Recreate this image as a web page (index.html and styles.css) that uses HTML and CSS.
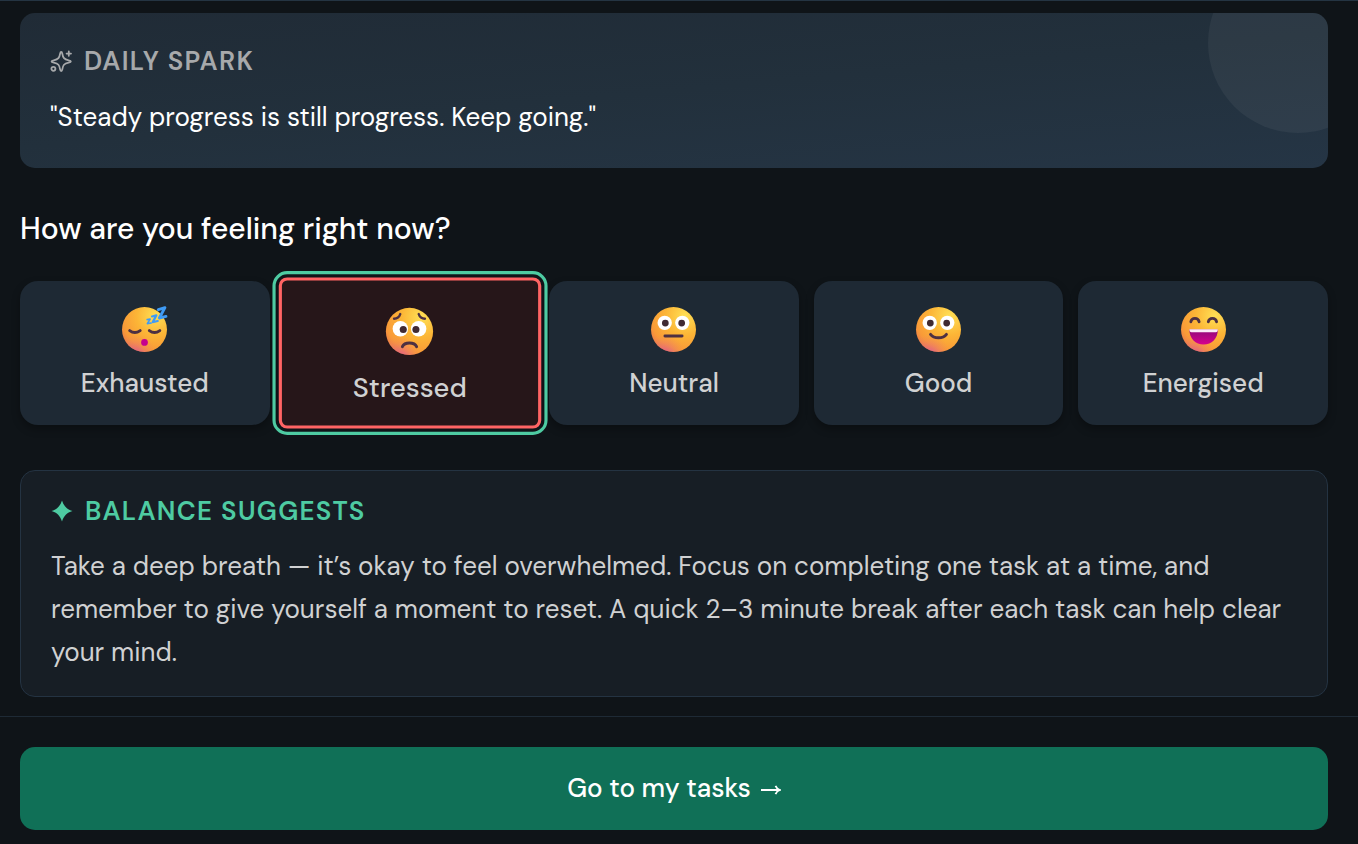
FILE: index.html
```html
<!DOCTYPE html>
<html lang="en">
<head>
    <meta charset="UTF-8">
    <meta name="viewport" content="width=device-width, initial-scale=1.0">
    <title>Balance - Check in</title>
    <link rel="stylesheet" href="styles.css">
</head>
<body>
    <!-- Shared gradients for the mood faces -->
    <svg class="defs" width="0" height="0" aria-hidden="true">
        <defs>
            <radialGradient id="face" cx="0.75" cy="0.2" r="0.95">
                <stop offset="0" stop-color="#ffe055"/>
                <stop offset="0.45" stop-color="#fcb536"/>
                <stop offset="0.8" stop-color="#f99a38"/>
                <stop offset="1" stop-color="#e8724f"/>
            </radialGradient>
            <radialGradient id="blush" cx="0.3" cy="1.05" r="0.45">
                <stop offset="0" stop-color="#e0569a" stop-opacity="0.9"/>
                <stop offset="1" stop-color="#f08a5a" stop-opacity="0"/>
            </radialGradient>
            <linearGradient id="laugh" x1="0" y1="0" x2="0" y2="1">
                <stop offset="0" stop-color="#8f0a78"/>
                <stop offset="1" stop-color="#d6008f"/>
            </linearGradient>
        </defs>
    </svg>

    <main>
        <section class="spark-card">
            <h2 class="card-label">
                <svg class="label-icon" viewBox="0 0 22 22" fill="none" stroke="currentColor" stroke-width="1.8" stroke-linejoin="round" stroke-linecap="round" aria-hidden="true">
                    <path d="M11.2 2 C11.8 2 12.1 2.6 12.3 3.6 C13 7.8 14 9.4 18.6 10.4 C21.6 11 21.6 12 18.6 12.6 C14 13.6 13 15 12.3 19.4 C12.1 20.6 11.8 21 11.2 21 C10.6 21 10.3 20.6 10.1 19.4 C9.4 15 8.4 13.6 3.8 12.6 C.8 12 .8 11 3.8 10.4 C8.4 9.4 9.4 7.8 10.1 3.6 C10.3 2.6 10.6 2 11.2 2 Z"/>
                    <path d="M18.8 1.4 V5.8 M16.6 3.6 H21"/>
                    <circle cx="3.4" cy="18.8" r="2"/>
                </svg>
                DAILY SPARK
            </h2>
            <p class="spark-quote">"Steady progress is still progress. Keep going."</p>
        </section>

        <h1>How are you feeling right now?</h1>

        <div class="moods">
            <button type="button" class="mood" aria-pressed="false">
                <svg class="mood-face" viewBox="0 0 44 44" aria-hidden="true">
                    <circle cx="22" cy="22" r="22" fill="url(#face)"/>
                    <circle cx="22" cy="22" r="22" fill="url(#blush)"/>
                    <path class="ink" d="M7.5 23 Q12.5 27 17.8 23 M26.7 23 Q31.8 27 37 23"/>
                    <circle cx="22" cy="34.6" r="3.3" fill="#c5008f"/>
                    <path class="zed" stroke-width="2.8" d="M35.5 2.6 L42 .6 L36.5 10.8 L43 9.2"/>
                    <path class="zed" stroke-width="2.1" d="M29.3 9.3 L33.6 8.2 L30 14.8 L35 13.7"/>
                    <path class="zed" stroke-width="1.6" d="M24.6 12.3 L27.5 11.8 L24.8 16.3 L28.5 15.7"/>
                </svg>
                <span>Exhausted</span>
            </button>
            <button type="button" class="mood mood-selected" aria-pressed="true">
                <svg class="mood-face" viewBox="0 0 44 44" aria-hidden="true">
                    <circle cx="22" cy="22" r="22" fill="url(#face)"/>
                    <circle cx="22" cy="22" r="22" fill="url(#blush)"/>
                    <path class="ink thin" d="M7.6 10.1 Q12 10 13.4 5.8 M30.6 5.8 Q32 10 36.4 10.1"/>
                    <circle cx="13.5" cy="19.5" r="7.2" fill="#fff"/>
                    <circle cx="30.5" cy="19.5" r="7.2" fill="#fff"/>
                    <circle cx="16.2" cy="20.2" r="3.3" fill="#402a32"/>
                    <circle cx="28" cy="20.2" r="3.3" fill="#402a32"/>
                    <path class="ink" d="M15.4 36.2 C17.5 31.7 26.5 31.7 28.6 36.2"/>
                </svg>
                <span>Stressed</span>
            </button>
            <button type="button" class="mood" aria-pressed="false">
                <svg class="mood-face" viewBox="0 0 44 44" aria-hidden="true">
                    <circle cx="22" cy="22" r="22" fill="url(#face)"/>
                    <circle cx="22" cy="22" r="22" fill="url(#blush)"/>
                    <circle cx="13.4" cy="15.5" r="7" fill="#fff"/>
                    <circle cx="30.6" cy="15.5" r="7" fill="#fff"/>
                    <circle cx="14" cy="15.7" r="3.3" fill="#402a32"/>
                    <circle cx="30" cy="15.7" r="3.3" fill="#402a32"/>
                    <path class="ink" d="M13.6 28.4 H30.4"/>
                </svg>
                <span>Neutral</span>
            </button>
            <button type="button" class="mood" aria-pressed="false">
                <svg class="mood-face" viewBox="0 0 44 44" aria-hidden="true">
                    <circle cx="22" cy="22" r="22" fill="url(#face)"/>
                    <circle cx="22" cy="22" r="22" fill="url(#blush)"/>
                    <circle cx="13.4" cy="15.5" r="7" fill="#fff"/>
                    <circle cx="30.6" cy="15.5" r="7" fill="#fff"/>
                    <circle cx="14" cy="15.7" r="3.3" fill="#402a32"/>
                    <circle cx="30" cy="15.7" r="3.3" fill="#402a32"/>
                    <path class="ink" d="M14.2 26.7 C17.5 31.2 26.5 31.2 29.8 26.7"/>
                </svg>
                <span>Good</span>
            </button>
            <button type="button" class="mood" aria-pressed="false">
                <svg class="mood-face" viewBox="0 0 44 44" aria-hidden="true">
                    <circle cx="22" cy="22" r="22" fill="url(#face)"/>
                    <circle cx="22" cy="22" r="22" fill="url(#blush)"/>
                    <path class="ink" d="M9.6 14.5 C10.5 10 16.8 10 17.7 14.5 M26.7 14.5 C27.6 10 33.9 10 34.8 14.5"/>
                    <path fill="url(#laugh)" d="M8.2 22 H36 C36 31 30 36.6 22.1 36.6 C14.2 36.6 8.2 31 8.2 22 Z"/>
                    <path fill="#fbeaf6" d="M8.2 21.8 H36 C36 23.8 35.3 24.6 34 24.6 H10.2 C8.9 24.6 8.2 23.8 8.2 21.8 Z"/>
                </svg>
                <span>Energised</span>
            </button>
        </div>

        <section class="suggestion-card">
            <h2 class="card-label">
                <svg class="label-icon" viewBox="0 0 22 22" aria-hidden="true">
                    <path fill="currentColor" d="M11 .5 C12.8 6.2 15.8 9.2 21.5 11 C15.8 12.8 12.8 15.8 11 21.5 C9.2 15.8 6.2 12.8 .5 11 C6.2 9.2 9.2 6.2 11 .5 Z"/>
                </svg>
                BALANCE SUGGESTS
            </h2>
            <p>Take a deep breath — it’s okay to feel overwhelmed. Focus on completing one task at a time, and remember to give yourself a moment to reset. A quick 2–3 minute break after each task can help clear your mind.</p>
        </section>
    </main>

    <footer>
        <button type="button" class="tasks-btn">
            Go to my tasks
            <svg viewBox="0 0 20 12" fill="none" stroke="currentColor" stroke-width="1.8" aria-hidden="true">
                <path d="M0 7 H18.5 M14.5 2.8 Q15.8 6 19 7 Q15.8 8 14.5 11.2"/>
            </svg>
        </button>
    </footer>
</body>
</html>
```

FILE: styles.css
```css
* {
    box-sizing: border-box;
}

body {
    font-family: "DM Sans", "Inter", "Liberation Sans", sans-serif;
    font-size: 26px;
    background-color: #0f1418;
    color: #fff;
    margin: 0;
    border-top: 1px solid #243442;
}

.defs {
    position: absolute;
}

main {
    padding: 12px 30px 19px 20px;
}

h1, h2, p {
    margin: 0;
}

h1 {
    font-size: 30px;
    font-weight: 500;
    line-height: 40px;
    margin: 41px 0 32px;
}

.card-label {
    display: flex;
    align-items: center;
    gap: 12px;
    font-size: 26px;
    font-weight: 600;
    letter-spacing: 0.05em;
    line-height: 36px;
}

.label-icon {
    width: 22px;
    height: 22px;
}

.spark-card {
    position: relative;
    overflow: hidden;
    padding: 30px 30px 31px;
    border-radius: 15px;
    background: linear-gradient(175deg, #202b36, #22303c 50%, #253545);
}

.spark-card::after {
    content: "";
    position: absolute;
    top: -60px;
    right: -60px;
    width: 180px;
    height: 180px;
    border-radius: 50%;
    background-color: rgba(255, 255, 255, 0.05);
}

.spark-card .card-label {
    color: #a7a9ab;
}

.spark-quote {
    margin-top: 18px;
    line-height: 40px;
}

.moods {
    display: grid;
    grid-template-columns: repeat(5, 1fr);
    gap: 15px;
}

.mood {
    display: flex;
    flex-direction: column;
    align-items: center;
    gap: 13px;
    padding: 26px 0 18px;
    border: 0;
    border-radius: 18px;
    background-color: #1e2934;
    color: #d0d1d2;
    font: inherit;
    font-weight: 500;
    line-height: 36px;
    box-shadow: 0 4px 8px rgba(0, 0, 0, 0.3);
    cursor: pointer;
}

.mood-face {
    width: 45px;
    height: 45px;
    overflow: visible;
}

.mood-selected {
    border: 3px solid #ff6464;
    border-radius: 8px;
    background-color: #261619;
    box-shadow: none;
    outline: 3px solid #4ecba2;
    outline-offset: 3px;
    transform: scale(1.05);
}

.ink {
    fill: none;
    stroke: #4d3042;
    stroke-width: 2.8;
    stroke-linecap: round;
}

.ink.thin {
    stroke-width: 2.2;
}

.zed {
    fill: none;
    stroke: #3f9bf5;
    stroke-linejoin: round;
    stroke-linecap: round;
}

.suggestion-card {
    margin-top: 45px;
    padding: 22px 30px;
    border: 1px solid #243342;
    border-radius: 15px;
    background-color: #171e25;
}

.suggestion-card .card-label {
    color: #4ecba2;
}

.suggestion-card p {
    margin-top: 16px;
    color: #d0d1d2;
    line-height: 43px;
}

footer {
    padding: 30px 30px 14px 20px;
    border-top: 1px solid #1e2a35;
}

.tasks-btn {
    display: flex;
    align-items: center;
    justify-content: center;
    gap: 10px;
    width: 100%;
    padding: 23px;
    border: 0;
    border-radius: 15px;
    background-color: #107057;
    color: #fff;
    font: inherit;
    font-weight: 500;
    line-height: 37px;
    cursor: pointer;
}

.tasks-btn svg {
    width: 20px;
    height: 12px;
}
```
